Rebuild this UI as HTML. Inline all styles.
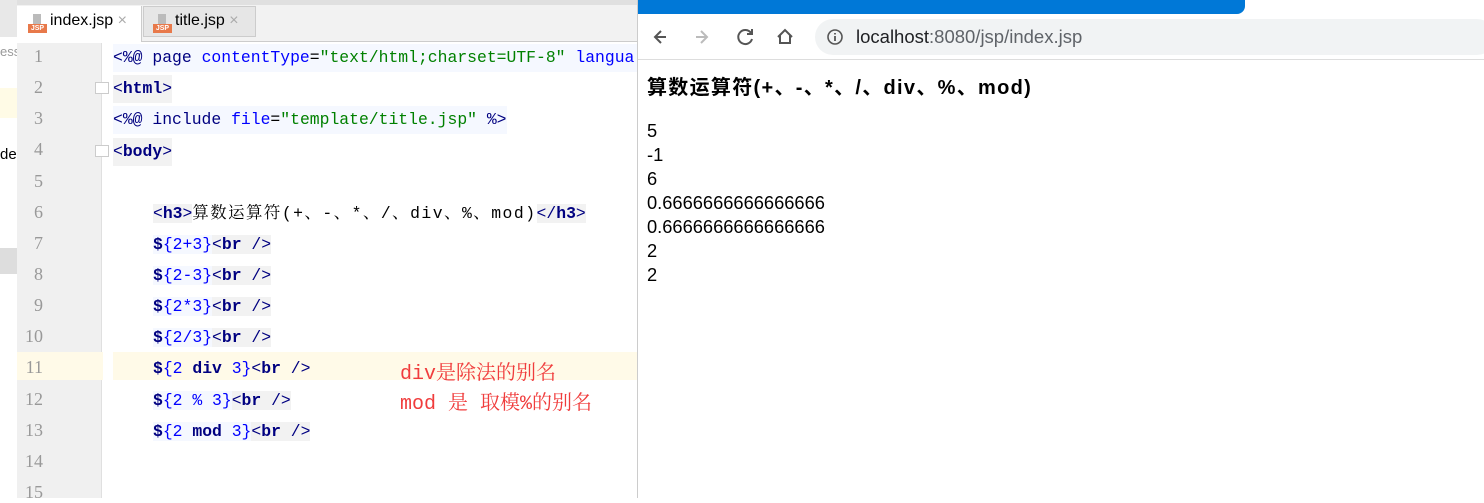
<!DOCTYPE html>
<html><head><meta charset="utf-8"><style>
*{margin:0;padding:0;box-sizing:border-box}
body{width:1484px;height:498px;overflow:hidden;background:#fff;position:relative;font-family:"Liberation Sans","Noto Sans CJK SC",sans-serif}
.ab{position:absolute}
.code{font-family:"Liberation Mono","Noto Serif CJK SC",monospace;font-size:16.4px;white-space:pre;line-height:28px;height:28px}
.ln{font-family:"Liberation Serif","Noto Serif CJK SC",serif;font-size:18px;color:#999;width:40px;text-align:right;left:3px}
.t{color:#000080;font-weight:bold}
.br{color:#000080}
.at{color:#0000ff}
.s{color:#008000}
.n{color:#0000ff}
.hl{background:#f2f2f2}
.hb{background:#f5f8ff}
.red{color:#f03c3c;font-family:"Liberation Mono","Noto Serif CJK SC",monospace;font-size:20px;white-space:pre}
.out{font-size:18.3px;left:647px;color:#000}
</style></head><body>
<div class="ab" style="left:0;top:0;width:17px;height:498px;background:#fff"></div>
<div class="ab" style="left:0;top:0;width:17px;height:37px;background:#e8e8e8"></div>
<div class="ab" style="left:0;top:88px;width:17px;height:30px;background:#fffbe6"></div>
<div class="ab" style="left:0;top:248px;width:17px;height:26px;background:#ddd"></div>
<div class="ab" style="left:0;top:146px;font-size:15px">de</div>
<div class="ab" style="left:0;top:44px;font-size:13px;color:#999">ess</div>
<div class="ab" style="left:17px;top:0;width:620px;height:42px;background:#f2f2f2;border-bottom:1px solid #ccc"></div>
<div class="ab" style="left:17px;top:0;width:620px;height:5px;background:#e0e0e0"></div>
<div class="ab" style="left:17px;top:6px;width:125px;height:36px;background:#fff;border-right:1px solid #ccc"></div>
<div class="ab" style="left:143px;top:6px;width:113px;height:31px;background:#e6e6e6;border:1px solid #ccc"></div>
<div class="ab" style="left:28px;top:24px;width:19px;height:9px;background:#e8794a;color:#fff;font-size:7px;line-height:9px;text-align:center;font-weight:bold">JSP</div>
<div class="ab" style="left:33px;top:14px;width:8px;height:10px;background:#bbb"></div>
<div class="ab" style="left:50px;top:12px;font-size:16px">index.jsp <span style="color:#aaa">×</span></div>
<div class="ab" style="left:153px;top:24px;width:19px;height:9px;background:#e8794a;color:#fff;font-size:7px;line-height:9px;text-align:center;font-weight:bold">JSP</div>
<div class="ab" style="left:158px;top:14px;width:8px;height:10px;background:#bbb"></div>
<div class="ab" style="left:175px;top:12px;font-size:16px">title.jsp <span style="color:#aaa">×</span></div>
<div class="ab" style="left:17px;top:43px;width:85px;height:455px;background:#f0f0f0;border-right:1px solid #e0e0e0"></div>
<div class="ab" style="left:17px;top:352px;width:620px;height:28px;background:#fffae8"></div>
<div class="ab" style="left:103px;top:352px;width:10px;height:28px;background:#fff"></div>

<div class="ab ln" style="top:46px">1</div>
<div class="ab ln" style="top:77px">2</div>
<div class="ab ln" style="top:108px">3</div>
<div class="ab ln" style="top:139px">4</div>
<div class="ab ln" style="top:171px">5</div>
<div class="ab ln" style="top:202px">6</div>
<div class="ab ln" style="top:233px">7</div>
<div class="ab ln" style="top:264px">8</div>
<div class="ab ln" style="top:295px">9</div>
<div class="ab ln" style="top:326px">10</div>
<div class="ab ln" style="top:357px">11</div>
<div class="ab ln" style="top:389px">12</div>
<div class="ab ln" style="top:420px">13</div>
<div class="ab ln" style="top:451px">14</div>
<div class="ab ln" style="top:482px">15</div>

<div class="ab" style="left:95px;top:82px;width:14px;height:12px;border:1px solid #ccc;background:#fff"></div>
<div class="ab" style="left:95px;top:145px;width:14px;height:12px;border:1px solid #ccc;background:#fff"></div>

<div class="ab code hb" style="left:113px;top:44px;width:524px"><span class="br">&lt;%@</span> <span class="t" style="font-weight:normal">page</span> <span class="at">contentType</span>=<span class="s">"text/html;charset=UTF-8"</span> <span class="at">langua</span></div>
<div class="ab code hl" style="left:113px;top:75px"><span class="br">&lt;</span><span class="t">html</span><span class="br">&gt;</span></div>
<div class="ab code hb" style="left:113px;top:106px"><span class="br">&lt;%@</span> <span class="t" style="font-weight:normal">include</span> <span class="at">file</span>=<span class="s">"template/title.jsp"</span> <span class="br">%&gt;</span></div>
<div class="ab code hl" style="left:113px;top:138px"><span class="br">&lt;</span><span class="t">body</span><span class="br">&gt;</span></div>
<div class="ab code" style="left:153px;top:200px"><span class="hl"><span class="br">&lt;</span><span class="t">h3</span><span class="br">&gt;</span></span><span style="letter-spacing:1.5px">算数运算符(+、-、*、/、div、%、mod)</span><span class="hl"><span class="br">&lt;/</span><span class="t">h3</span><span class="br">&gt;</span></span></div>
<div class="ab code" style="left:153px;top:231px"><span class="hb"><span class="t">$</span><span class="n">{2+3}</span></span><span class="hl"><span class="br">&lt;</span><span class="t">br</span> <span class="br">/&gt;</span></span></div>
<div class="ab code" style="left:153px;top:262px"><span class="hb"><span class="t">$</span><span class="n">{2-3}</span></span><span class="hl"><span class="br">&lt;</span><span class="t">br</span> <span class="br">/&gt;</span></span></div>
<div class="ab code" style="left:153px;top:293px"><span class="hb"><span class="t">$</span><span class="n">{2*3}</span></span><span class="hl"><span class="br">&lt;</span><span class="t">br</span> <span class="br">/&gt;</span></span></div>
<div class="ab code" style="left:153px;top:324px"><span class="hb"><span class="t">$</span><span class="n">{2/3}</span></span><span class="hl"><span class="br">&lt;</span><span class="t">br</span> <span class="br">/&gt;</span></span></div>
<div class="ab code" style="left:153px;top:355px"><span class="t">$</span><span class="n">{2 </span><span class="t">div</span><span class="n"> 3}</span><span class="br">&lt;</span><span class="t">br</span> <span class="br">/&gt;</span></div>
<div class="ab code" style="left:153px;top:387px"><span class="hb"><span class="t">$</span><span class="n">{2 % 3}</span></span><span class="hl"><span class="br">&lt;</span><span class="t">br</span> <span class="br">/&gt;</span></span></div>
<div class="ab code" style="left:153px;top:418px"><span class="hb"><span class="t">$</span><span class="n">{2 </span><span class="t">mod</span><span class="n"> 3}</span></span><span class="hl"><span class="br">&lt;</span><span class="t">br</span> <span class="br">/&gt;</span></span></div>

<div class="ab red" style="left:400px;top:356px">div是除法的别名</div>
<div class="ab red" style="left:400px;top:386px">mod 是 取模%的别名</div>

<div class="ab" style="left:637px;top:0;width:847px;height:498px;background:#fff;border-left:1px solid #ccc"></div>
<div class="ab" style="left:638px;top:0;width:607px;height:14px;background:#0078d7;border-radius:0 0 8px 0"></div>
<div class="ab" style="left:638px;top:14px;width:846px;height:46px;background:#fff;border-bottom:1px solid #ddd"></div>
<svg class="ab" style="left:650px;top:24px" width="150" height="26" viewBox="0 0 150 26" fill="none" stroke-width="2">
<path d="M16 13H6M11 7L5 13l6 6" stroke="#555"/>
<path d="M46 13h10M51 7l6 6-6 6" stroke="#bbb"/>
<path d="M101 9a7 7 0 1 0 1 6M102 5v5h-5" stroke="#555"/>
<path d="M128 13l7-7 7 7M130 11v8h10v-8" stroke="#555"/>
</svg>
<div class="ab" style="left:815px;top:19px;width:680px;height:36px;background:#f1f3f4;border-radius:18px"></div>
<svg class="ab" style="left:826px;top:28px" width="18" height="18" viewBox="0 0 18 18"><circle cx="9" cy="9" r="7" fill="none" stroke="#555" stroke-width="1.6"/><path d="M9 8v5M9 5v1.5" stroke="#555" stroke-width="1.8"/></svg>
<div class="ab" style="left:856px;top:26px;font-size:18.5px;color:#202124">localhost<span style="color:#5f6368">:8080/jsp/index.jsp</span></div>

<div class="ab" style="left:647px;top:71px;font-size:20px;font-weight:bold;letter-spacing:1.3px">算数运算符(+、-、*、/、div、%、mod)</div>
<div class="ab out" style="top:120px">5</div>
<div class="ab out" style="top:144px">-1</div>
<div class="ab out" style="top:168px">6</div>
<div class="ab out" style="top:192px">0.6666666666666666</div>
<div class="ab out" style="top:216px">0.6666666666666666</div>
<div class="ab out" style="top:240px">2</div>
<div class="ab out" style="top:264px">2</div>
</body></html>
